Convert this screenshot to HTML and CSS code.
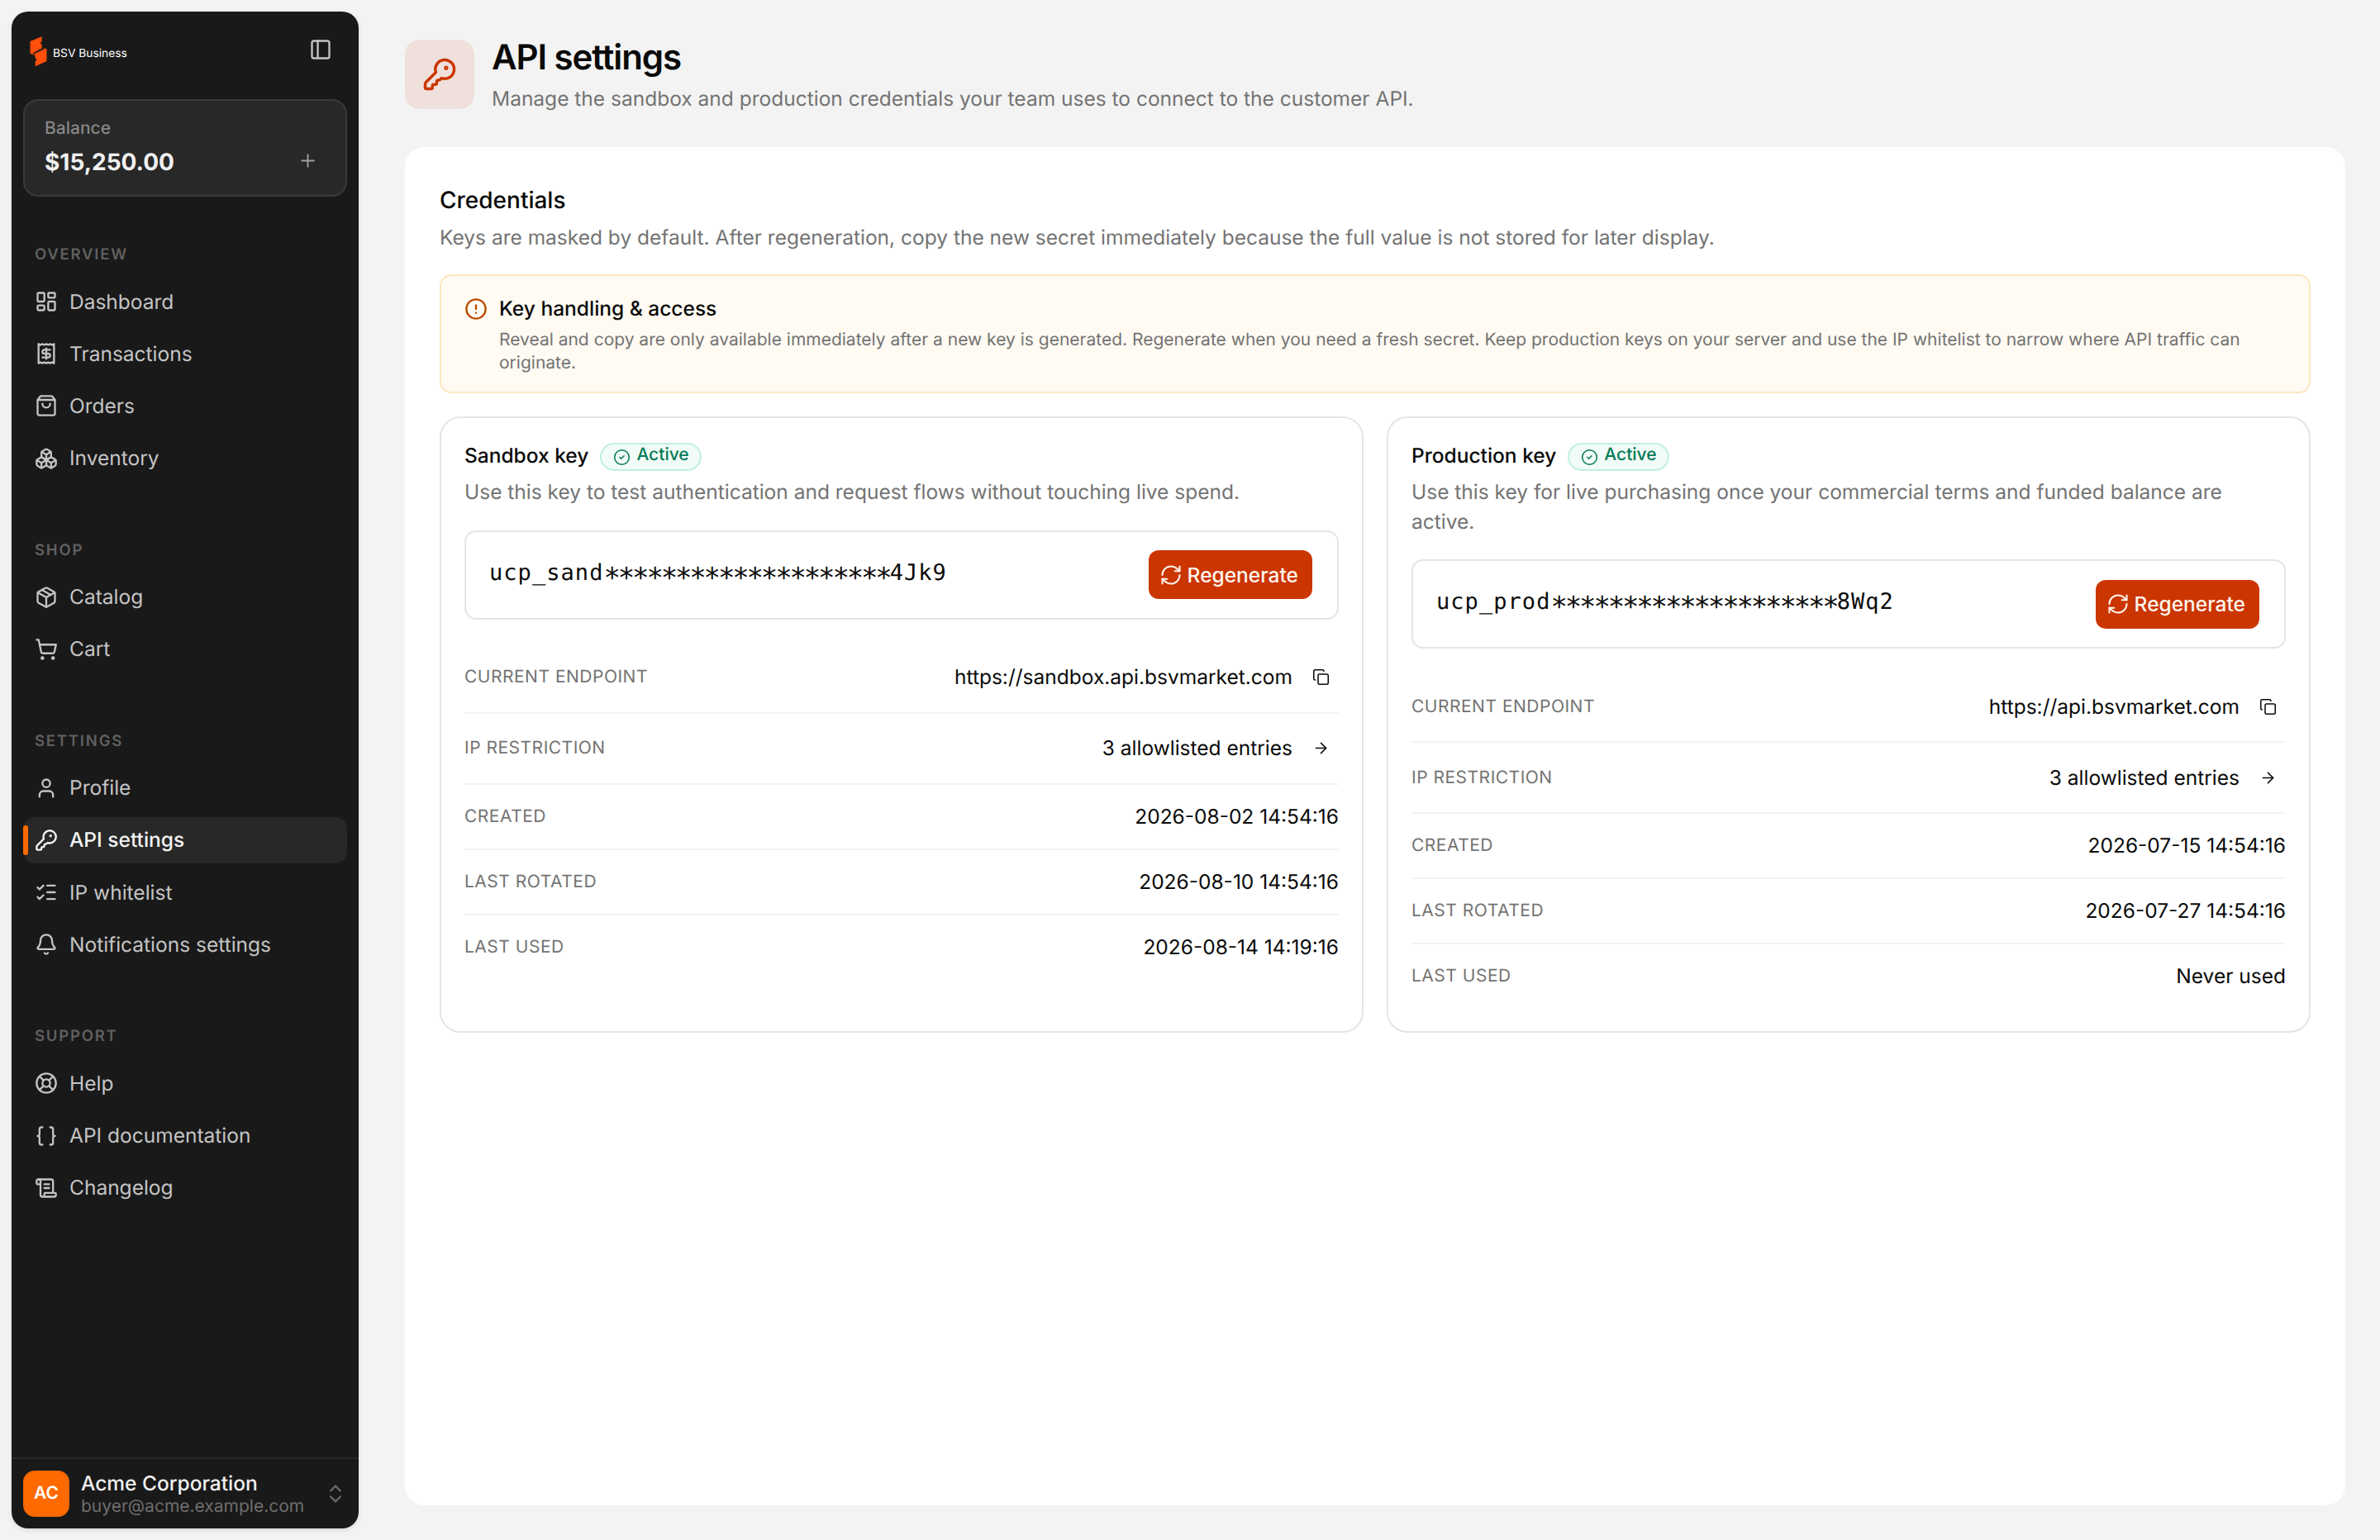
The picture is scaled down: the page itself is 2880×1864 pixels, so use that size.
FILE: index.html
```html
<!DOCTYPE html>
<html lang="en">
<head>
  <meta charset="UTF-8" />
  <meta name="viewport" content="width=device-width, initial-scale=1.0" />
  <title>API settings - BSV Business</title>
  <link rel="stylesheet" href="styles.css">
</head>
<body>
  <svg class="sprite" aria-hidden="true">
    <symbol id="i-panel" viewBox="0 0 24 24"><rect width="18" height="18" x="3" y="3" rx="2"/><path d="M9 3v18"/></symbol>
    <symbol id="i-plus" viewBox="0 0 24 24"><path d="M5 12h14M12 5v14"/></symbol>
    <symbol id="i-dashboard" viewBox="0 0 24 24"><rect width="7" height="9" x="3" y="3" rx="1"/><rect width="7" height="5" x="14" y="3" rx="1"/><rect width="7" height="9" x="14" y="12" rx="1"/><rect width="7" height="5" x="3" y="16" rx="1"/></symbol>
    <symbol id="i-receipt" viewBox="0 0 24 24"><path d="M4 2v20l2-1 2 1 2-1 2 1 2-1 2 1 2-1 2 1V2l-2 1-2-1-2 1-2-1-2 1-2-1-2 1Z"/><path d="M16 8h-6a2 2 0 1 0 0 4h4a2 2 0 1 1 0 4H8"/><path d="M12 17.5v-11"/></symbol>
    <symbol id="i-bag" viewBox="0 0 24 24"><path d="M16 10a4 4 0 0 1-8 0"/><path d="M3.103 6.034h17.794"/><path d="M3.4 5.467a2 2 0 0 0-.4 1.2V20a2 2 0 0 0 2 2h14a2 2 0 0 0 2-2V6.667a2 2 0 0 0-.4-1.2l-2-2.667A2 2 0 0 0 17 2H7a2 2 0 0 0-1.6.8z"/></symbol>
    <symbol id="i-boxes" viewBox="0 0 24 24"><path d="M2.97 12.92A2 2 0 0 0 2 14.63v3.24a2 2 0 0 0 .97 1.71l3 1.8a2 2 0 0 0 2.06 0L12 19v-5.5l-5-3-4.03 2.42Z"/><path d="m7 16.5-4.74-2.85"/><path d="m7 16.5 5-3"/><path d="M7 16.5v5.17"/><path d="M12 13.5V19l3.97 2.38a2 2 0 0 0 2.06 0l3-1.8a2 2 0 0 0 .97-1.71v-3.24a2 2 0 0 0-.97-1.71L17 10.5l-5 3Z"/><path d="m17 16.5-5-3"/><path d="m17 16.5 4.74-2.85"/><path d="M17 16.5v5.17"/><path d="M7.97 4.42A2 2 0 0 0 7 6.13v4.37l5 3 5-3V6.13a2 2 0 0 0-.97-1.71l-3-1.8a2 2 0 0 0-2.06 0l-3 1.8Z"/><path d="M12 8 7.26 5.15"/><path d="m12 8 4.74-2.85"/><path d="M12 13.5V8"/></symbol>
    <symbol id="i-package" viewBox="0 0 24 24"><path d="M11 21.73a2 2 0 0 0 2 0l7-4A2 2 0 0 0 21 16V8a2 2 0 0 0-1-1.73l-7-4a2 2 0 0 0-2 0l-7 4A2 2 0 0 0 3 8v8a2 2 0 0 0 1 1.73z"/><path d="M12 22V12"/><path d="M3.29 7 12 12l8.71-5"/><path d="m7.5 4.27 9 5.15"/></symbol>
    <symbol id="i-cart" viewBox="0 0 24 24"><circle cx="8" cy="21" r="1"/><circle cx="19" cy="21" r="1"/><path d="M2.05 2.05h2l2.66 12.42a2 2 0 0 0 2 1.58h9.78a2 2 0 0 0 1.95-1.57l1.65-7.43H5.12"/></symbol>
    <symbol id="i-user" viewBox="0 0 24 24"><circle cx="12" cy="7" r="4"/><path d="M19 21v-2a4 4 0 0 0-4-4H9a4 4 0 0 0-4 4v2"/></symbol>
    <symbol id="i-key" viewBox="0 0 24 24"><path d="M2.586 17.414A2 2 0 0 0 2 18.828V21a1 1 0 0 0 1 1h3a1 1 0 0 0 1-1v-1a1 1 0 0 1 1-1h1a1 1 0 0 0 1-1v-1a1 1 0 0 1 1-1h.172a2 2 0 0 0 1.414-.586l.814-.814a6.5 6.5 0 1 0-4-4z"/><circle cx="16.5" cy="7.5" r=".5" fill="currentColor"/></symbol>
    <symbol id="i-checks" viewBox="0 0 24 24"><path d="M13 5h8M13 12h8M13 19h8"/><path d="m3 17 2 2 4-4"/><path d="m3 7 2 2 4-4"/></symbol>
    <symbol id="i-bell" viewBox="0 0 24 24"><path d="M10.268 21a2 2 0 0 0 3.464 0"/><path d="M3.262 15.326A1 1 0 0 0 4 17h16a1 1 0 0 0 .74-1.673C19.41 13.956 18 12.499 18 8A6 6 0 0 0 6 8c0 4.499-1.411 5.956-2.738 7.326"/></symbol>
    <symbol id="i-help" viewBox="0 0 24 24"><circle cx="12" cy="12" r="10"/><path d="m4.93 4.93 4.24 4.24M14.83 9.17l4.24-4.24M14.83 14.83l4.24 4.24M9.17 14.83l-4.24 4.24"/><circle cx="12" cy="12" r="4"/></symbol>
    <symbol id="i-braces" viewBox="0 0 24 24"><path d="M8 3H7a2 2 0 0 0-2 2v5a2 2 0 0 1-2 2 2 2 0 0 1 2 2v5c0 1.1.9 2 2 2h1"/><path d="M16 21h1a2 2 0 0 0 2-2v-5c0-1.1.9-2 2-2a2 2 0 0 1-2-2V5a2 2 0 0 0-2-2h-1"/></symbol>
    <symbol id="i-scroll" viewBox="0 0 24 24"><path d="M15 12h-5M15 8h-5"/><path d="M19 17V5a2 2 0 0 0-2-2H4"/><path d="M8 21h12a2 2 0 0 0 2-2v-1a1 1 0 0 0-1-1H11a1 1 0 0 0-1 1v1a2 2 0 1 1-4 0V5a2 2 0 1 0-4 0v2a1 1 0 0 0 1 1h3"/></symbol>
    <symbol id="i-updown" viewBox="0 0 24 24"><path d="m7 15 5 5 5-5"/><path d="m7 9 5-5 5 5"/></symbol>
    <symbol id="i-alert" viewBox="0 0 24 24"><circle cx="12" cy="12" r="10"/><path d="M12 8v4M12 16h.01"/></symbol>
    <symbol id="i-check" viewBox="0 0 24 24"><circle cx="12" cy="12" r="10"/><path d="m9 12 2 2 4-4"/></symbol>
    <symbol id="i-refresh" viewBox="0 0 24 24"><path d="M3 12a9 9 0 0 1 9-9 9.75 9.75 0 0 1 6.74 2.74L21 8"/><path d="M21 3v5h-5"/><path d="M21 12a9 9 0 0 1-9 9 9.75 9.75 0 0 1-6.74-2.74L3 16"/><path d="M8 16H3v5"/></symbol>
    <symbol id="i-copy" viewBox="0 0 24 24"><rect width="14" height="14" x="8" y="8" rx="2"/><path d="M4 16c-1.1 0-2-.9-2-2V4c0-1.1.9-2 2-2h10c1.1 0 2 .9 2 2"/></symbol>
    <symbol id="i-arrow" viewBox="0 0 24 24"><path d="M5 12h14"/><path d="m12 5 7 7-7 7"/></symbol>
  </svg>

  <aside class="sidebar">
    <div class="brand">
      <svg class="logo" viewBox="0 0 21 37">
        <path d="M.5 6 14.5.3v6l-1.8 2 2 2.3v4L20.500 15v15L6.700 36.300v-6l1.800-2-2-2.300v-3L.5 20.800z M3.500 20.800 6.300 22v-1.200L17.500 15.500 14.700 14.200z" fill-rule="evenodd"/>
      </svg>
      <span class="brand-name">BSV Business</span>
      <svg class="icon toggle"><use href="#i-panel"/></svg>
    </div>

    <div class="balance">
      <div class="balance-label">Balance</div>
      <div class="balance-row">
        <span class="balance-amount">$15,250.00</span>
        <svg class="icon plus"><use href="#i-plus"/></svg>
      </div>
    </div>

    <nav class="nav">
      <section class="group">
        <h2>Overview</h2>
        <ul>
          <li><svg class="icon"><use href="#i-dashboard"/></svg><span>Dashboard</span></li>
          <li><svg class="icon"><use href="#i-receipt"/></svg><span>Transactions</span></li>
          <li><svg class="icon"><use href="#i-bag"/></svg><span>Orders</span></li>
          <li><svg class="icon"><use href="#i-boxes"/></svg><span>Inventory</span></li>
        </ul>
      </section>
      <section class="group">
        <h2>Shop</h2>
        <ul>
          <li><svg class="icon"><use href="#i-package"/></svg><span>Catalog</span></li>
          <li><svg class="icon"><use href="#i-cart"/></svg><span>Cart</span></li>
        </ul>
      </section>
      <section class="group">
        <h2>Settings</h2>
        <ul>
          <li><svg class="icon"><use href="#i-user"/></svg><span>Profile</span></li>
          <li class="active"><svg class="icon"><use href="#i-key"/></svg><span>API settings</span></li>
          <li><svg class="icon"><use href="#i-checks"/></svg><span>IP whitelist</span></li>
          <li><svg class="icon"><use href="#i-bell"/></svg><span>Notifications settings</span></li>
        </ul>
      </section>
      <section class="group">
        <h2>Support</h2>
        <ul>
          <li><svg class="icon"><use href="#i-help"/></svg><span>Help</span></li>
          <li><svg class="icon"><use href="#i-braces"/></svg><span>API documentation</span></li>
          <li><svg class="icon"><use href="#i-scroll"/></svg><span>Changelog</span></li>
        </ul>
      </section>
    </nav>

    <div class="account">
      <div class="avatar">AC</div>
      <div class="account-text">
        <div class="account-name">Acme Corporation</div>
        <div class="account-mail">buyer@acme.example.com</div>
      </div>
      <svg class="icon"><use href="#i-updown"/></svg>
    </div>
  </aside>

  <main>
    <header class="page-header">
      <div class="page-icon"><svg class="icon"><use href="#i-key"/></svg></div>
      <div>
        <h1>API settings</h1>
        <p>Manage the sandbox and production credentials your team uses to connect to the customer API.</p>
      </div>
    </header>

    <div class="panel">
      <h2 class="panel-title">Credentials</h2>
      <p class="muted">Keys are masked by default. After regeneration, copy the new secret immediately because the full value is not stored for later display.</p>

      <div class="notice">
        <svg class="icon"><use href="#i-alert"/></svg>
        <div>
          <h3>Key handling &amp; access</h3>
          <p>Reveal and copy are only available immediately after a new key is generated. Regenerate when you need a fresh secret. Keep production keys on your server and use the IP whitelist to narrow where API traffic can originate.</p>
        </div>
      </div>

      <div class="keys">
        <article class="key-card">
          <div class="key-head">
            <h3>Sandbox key</h3>
            <span class="badge"><svg class="icon"><use href="#i-check"/></svg><span>Active</span></span>
          </div>
          <p class="muted">Use this key to test authentication and request flows without touching live spend.</p>
          <div class="key-box">
            <code>ucp_sand<span class="mask">********************</span>4Jk9</code>
            <button class="btn"><svg class="icon"><use href="#i-refresh"/></svg>Regenerate</button>
          </div>
          <dl>
            <div class="row tall"><dt>Current endpoint</dt><dd>https://sandbox.api.bsvmarket.com<span class="icon-btn"><svg class="icon"><use href="#i-copy"/></svg></span></dd></div>
            <div class="row tall"><dt>IP restriction</dt><dd>3 allowlisted entries<span class="icon-btn"><svg class="icon"><use href="#i-arrow"/></svg></span></dd></div>
            <div class="row"><dt>Created</dt><dd>2026-08-02 14:54:16</dd></div>
            <div class="row"><dt>Last rotated</dt><dd>2026-08-10 14:54:16</dd></div>
            <div class="row"><dt>Last used</dt><dd>2026-08-14 14:19:16</dd></div>
          </dl>
        </article>

        <article class="key-card">
          <div class="key-head">
            <h3>Production key</h3>
            <span class="badge"><svg class="icon"><use href="#i-check"/></svg><span>Active</span></span>
          </div>
          <p class="muted">Use this key for live purchasing once your commercial terms and funded balance are active.</p>
          <div class="key-box">
            <code>ucp_prod<span class="mask">********************</span>8Wq2</code>
            <button class="btn"><svg class="icon"><use href="#i-refresh"/></svg>Regenerate</button>
          </div>
          <dl>
            <div class="row tall"><dt>Current endpoint</dt><dd>https://api.bsvmarket.com<span class="icon-btn"><svg class="icon"><use href="#i-copy"/></svg></span></dd></div>
            <div class="row tall"><dt>IP restriction</dt><dd>3 allowlisted entries<span class="icon-btn"><svg class="icon"><use href="#i-arrow"/></svg></span></dd></div>
            <div class="row"><dt>Created</dt><dd>2026-07-15 14:54:16</dd></div>
            <div class="row"><dt>Last rotated</dt><dd>2026-07-27 14:54:16</dd></div>
            <div class="row"><dt>Last used</dt><dd>Never used</dd></div>
          </dl>
        </article>
      </div>
    </div>
  </main>
</body>
</html>
```
FILE: styles.css
```css
* { box-sizing: border-box; margin: 0; padding: 0; }
body { font-family: Inter, sans-serif; font-size: 24.5px; line-height: 35px; background: #f3f3f3; color: #0a0a0a; height: 1864px; display: flex; text-rendering: geometricPrecision; -webkit-font-smoothing: antialiased; }
ul { list-style: none; }
.sprite { position: absolute; width: 0; height: 0; }
.icon { width: 28px; height: 28px; flex-shrink: 0; fill: none; stroke: currentColor; stroke-width: 2; stroke-linecap: round; stroke-linejoin: round; display: block; }

/* sidebar */
.sidebar { width: 420px; height: 1836px; margin: 14px; background: #191919; border-radius: 20px; box-shadow: 0 2px 6px rgba(0,0,0,0.1); color: #c4c4c4; display: flex; flex-direction: column; flex-shrink: 0; overflow: hidden; }
.brand { display: flex; align-items: center; height: 92px; padding: 0 32px 0 22px; }
.logo { width: 21px; height: 37px; fill: #ff4f0a; margin-top: 4px; }
.brand-name { font-size: 13.8px; line-height: 20px; color: #fff; margin: 10px auto 0 7px; }
.balance { margin: 14px 14px 0; height: 118px; border: 2px solid #3a3a3a; border-radius: 18px; background: #282828; padding: 20px 24px; }
.balance-label { font-size: 21px; line-height: 28px; font-weight: 500; color: #878787; }
.balance-row { display: flex; align-items: center; justify-content: space-between; height: 42px; margin-top: 5px; padding-right: 9px; }
.balance-amount { font-size: 28px; font-weight: 700; color: #f0f0f0; }
.plus { width: 25px; height: 25px; stroke-width: 1.75; margin-top: -3px; color: #a0a0a0; }
.nav { flex: 1; padding: 56px 14px 0; }
.group { margin-bottom: 69px; }
.group h2 { font-size: 18.5px; line-height: 28px; font-weight: 600; letter-spacing: 1.8px; text-transform: uppercase; color: #606060; padding-left: 14px; margin-bottom: 15px; }
.group ul { display: flex; flex-direction: column; gap: 7.2px; }
.group li { display: flex; align-items: center; gap: 14px; height: 56px; padding-left: 14px; border-radius: 14px; }
.group li.active { position: relative; background: #282828; color: #f3f3f3; font-weight: 550; }
.group li.active::before { content: ""; position: absolute; left: 0; top: 10px; width: 6px; height: 36px; border-radius: 3px; background: #ff6a00; }
.account { display: flex; align-items: center; gap: 14px; height: 86px; border-top: 2px solid #282828; padding: 0 14px; }
.avatar { width: 56px; height: 56px; border-radius: 14px; background: #ff6a00; border: 2px solid #f06805; color: #fff; font-size: 21px; line-height: 51px; font-weight: 600; text-align: center; }
.account-text { flex: 1; }
.account-name { line-height: 30px; font-weight: 500; color: #f0f0f0; }
.account-mail { font-size: 21px; line-height: 27px; color: #6e6e6e; }
.account .icon { color: #6a6a6a; }

/* page */
main { flex: 1; padding: 42px; display: flex; flex-direction: column; }
.page-header { display: flex; gap: 21px; height: 136px; }
.page-icon { width: 84px; height: 84px; margin-top: 6px; border-radius: 18px; background: #efe0dc; color: #cb3500; display: flex; align-items: center; justify-content: center; }
.page-icon .icon { width: 42px; height: 42px; }
h1 { font-size: 42px; line-height: 55px; font-weight: 640; letter-spacing: -1.1px; }
.page-header p { color: #737373; margin-top: 5px; }
.panel { flex: 1; background: #fff; border-radius: 24px; padding: 43px 42px 42px; }
.panel-title { font-size: 28px; line-height: 42px; font-weight: 500; margin-bottom: 7px; }
.muted { color: #737373; }
h3 { font-size: 24.5px; line-height: 35px; font-weight: 500; }
.notice { display: flex; gap: 14px; margin: 27px 0 28px; padding: 22px 28px 20px; border: 2px solid #fde6c0; border-radius: 14px; background: #fffaf2; }
.notice .icon { color: #bb4d00; margin-top: 4px; }
.notice p { font-size: 21px; line-height: 28px; margin-top: 7px; color: #737373; }

/* key cards */
.keys { display: grid; grid-template-columns: 1fr 1fr; gap: 28px; }
.key-card { height: 746px; border: 2px solid #e5e5e5; border-radius: 25px; padding: 28px; }
.key-head { display: flex; align-items: center; gap: 14px; height: 38px; margin-bottom: 6px; }
.key-head h3 { margin-top: -4px; }
.badge { display: flex; align-items: center; gap: 7px; height: 34px; padding: 0 13px 0 14px; border: 2px solid #c0f0de; border-radius: 17px; background: #f1fbf7; color: #007a55; font-size: 21px; font-weight: 500; }
.badge .icon { width: 21px; height: 21px; stroke-width: 1.75; }
.badge span { line-height: 26px; margin-top: -4px; }
.key-card .muted { line-height: 35.5px; }
.key-box { display: flex; align-items: center; justify-content: space-between; height: 108px; margin: 28px 0; padding: 0 30px 0 28px; border: 2px solid #e5e5e5; border-radius: 14px; }
code { font-family: "DejaVu Sans Mono", monospace; font-size: 27px; letter-spacing: 1.05px; white-space: nowrap; margin-top: 1px; }
.mask { font-size: 34px; letter-spacing: -3.16px; line-height: 1; vertical-align: -9px; }
.btn { display: flex; align-items: center; gap: 6px; height: 59px; padding: 0 17px 0 13px; border: none; border-radius: 12px; background: #cb3500; color: #fff5ee; font: 500 24.5px Inter, sans-serif; }
.btn .icon { stroke-width: 1.75; }
.row { display: flex; align-items: center; justify-content: space-between; height: 79px; border-bottom: 2px solid #f3f3f3; }
.row.tall { height: 86px; }
.row:last-child { border-bottom: none; height: 77px; }
dt { font-size: 21px; text-transform: uppercase; letter-spacing: 0.5px; color: #737373; }
dd { display: flex; align-items: center; gap: 14px; }
.icon-btn { width: 42px; height: 42px; padding-right: 1px; display: flex; align-items: center; justify-content: center; }
.icon-btn .icon { width: 21px; height: 21px; stroke-width: 1.75; }
```
